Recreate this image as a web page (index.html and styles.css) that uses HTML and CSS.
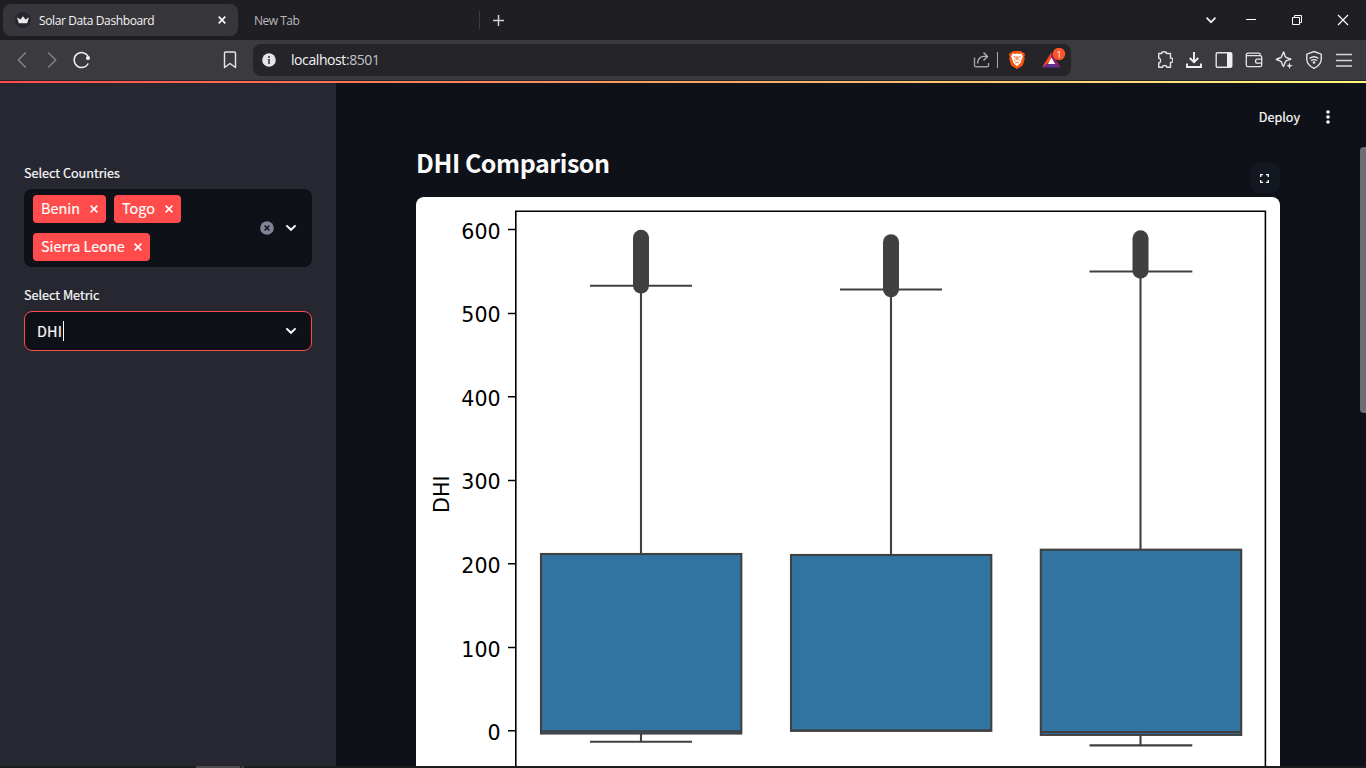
FILE: index.html
```html
<!DOCTYPE html>
<html lang="en">
<head>
<meta charset="utf-8">
<title>Solar Data Dashboard</title>
<link rel="stylesheet" href="styles.css">
</head>
<body>
<div class="window">
  <header class="tabstrip">
    <div class="tab tab-active">
      <svg class="favicon" width="16" height="16" viewBox="0 0 16 16"><circle cx="8" cy="8" r="8" fill="#262730"/><path d="M2 5.200 5.400 7.500 8 4.200 10.600 7.500 14 5.200 12.200 11.300H3.800Z" fill="#e8e8e8"/></svg>
      <span class="tab-title">Solar Data Dashboard</span>
      <svg class="tab-close" width="8" height="8" viewBox="0 0 8 8"><path d="M.7.7 7.3 7.3M7.3.7.7 7.3" stroke="#f5f5f5" stroke-width="1.7"/></svg>
    </div>
    <div class="tab tab-idle"><span>New Tab</span></div>
    <button class="new-tab" aria-label="New tab"><svg width="11" height="11" viewBox="0 0 11 11"><path d="M5.500 0V11M0 5.500H11" stroke="#d0d0d2" stroke-width="1.500"/></svg></button>
    <div class="window-controls">
      <svg width="46" height="40" viewBox="0 0 46 40"><path d="M18.500 17.700 23 22.200 27.500 17.700" fill="none" stroke="#eee" stroke-width="1.700"/></svg>
      <svg width="40" height="40" viewBox="0 0 40 40"><path d="M12 19.500H22" stroke="#fff"/></svg>
      <svg width="46" height="40" viewBox="0 0 46 40"><path d="M18.500 17.500H25.500V24.500H18.500ZM20.500 17V15.500H27.500V22.500H26" fill="none" stroke="#fff"/></svg>
      <svg width="46" height="40" viewBox="0 0 46 40"><path d="M18 15 28 25M28 15 18 25" stroke="#fff" stroke-width="1.200"/></svg>
    </div>
  </header>

  <nav class="toolbar">
    <div class="nav-buttons">
      <svg width="30" height="40" viewBox="0 0 30 40"><path d="M18.800 12.500 11.300 20 18.800 27.500" fill="none" stroke="#88888d" stroke-width="1.300"/></svg>
      <svg width="30" height="40" viewBox="0 0 30 40"><path d="M11.200 12.500 18.700 20 11.200 27.500" fill="none" stroke="#88888d" stroke-width="1.300"/></svg>
      <svg width="30" height="40" viewBox="0 0 30 40"><path d="M21.300 23.500A7.500 7.500 0 1 1 21.300 16.500" fill="none" stroke="#f2f2f2" stroke-width="1.500"/><circle cx="21" cy="18" r="2.100" fill="#f2f2f2"/></svg>
    </div>
    <svg class="bookmark" width="14" height="18" viewBox="0 0 14 18"><path d="M2.500 1H11.500Q12.500 1 12.500 2V16.500L7 12.500 1.500 16.500V2Q1.500 1 2.500 1Z" fill="none" stroke="#e8e8ea" stroke-width="1.400" stroke-linejoin="round"/></svg>
    <div class="address">
      <svg class="info" width="14" height="14" viewBox="0 0 14 14"><circle cx="7" cy="7" r="6.800" fill="#e4e4e9"/><path d="M6 3H8V5H6ZM5.500 6H8V11H6V7H5.500Z" fill="#5b5b61"/></svg>
      <span class="url">localhost<span class="port">:8501</span></span>
      <div class="address-actions">
        <svg width="17" height="18" viewBox="0 0 17 18"><path d="M1.500 6.500V14.500Q1.500 15.800 3 15.800H14.200Q15.500 15.800 15.500 14.500V12" fill="none" stroke="#9f9fa2" stroke-width="1.400"/><path d="M4.500 12.500Q5 6 10.500 5.400H14M10.500 1.500 14.500 5.400 10.500 9.400" fill="none" stroke="#b4b4b6" stroke-width="1.400"/></svg>
        <i class="separator"></i>
        <svg class="lion" width="16" height="18" viewBox="0 0 16 18"><path d="M4 0H12L13.300 1.500 15 1.700 16 4 15.200 6 15.700 8 13.800 14.400 8 18 2.200 14.400.3 8 .8 6 0 4 1 1.700 2.700 1.500Z" fill="#fb5410"/><path d="M3.500 2.500 6 3 8 2.500 10 3 12.500 2.500 13.800 5.500 12.300 9.500 11.500 12 8 15.300 4.500 12 3.700 9.500 2.200 5.500Z" fill="#fff"/><path d="M4.300 5.700 6.500 6.200M11.700 5.700 9.500 6.200M7.200 5.500V9M8.800 5.500V9M4.800 8.500 6.500 10M11.200 8.500 9.500 10M6.200 12 8 11 9.800 12" fill="none" stroke="#fb5410" stroke-width=".9"/></svg>
        <svg class="rewards" width="24" height="22" viewBox="0 0 24 22"><path d="M9.500 4 0 19.500 9.500 15Z" fill="#ff4724"/><path d="M0 19.500H18.500L14 15H6Z" fill="#662d91"/><path d="M9.500 4 18.500 19.500 13.500 16 9.500 9Z" fill="#9e1f63"/><path d="M9.500 9.500 6 16H13.200Z" fill="#fff"/><circle cx="17" cy="6" r="6.200" fill="#fb542b"/><text x="17" y="9.500" text-anchor="middle" class="badge-text">1</text></svg>
      </div>
    </div>
    <div class="extensions">
      <svg width="18" height="20" viewBox="0 0 18 20"><path d="M3.200 3.500H6.200C6.200 1.200 11 1.200 11 3.500H15V8C18.300 8 18.300 12.500 15 12.500V17.300H11.300C11.300 14.800 7 14.800 7 17.300H3.200V13C5.700 13 5.700 8.200 3.200 8.200Z" transform="translate(.5 0)" fill="none" stroke="#e4e4e8" stroke-width="1.400" stroke-linejoin="round"/></svg>
      <svg width="18" height="20" viewBox="0 0 18 20"><path d="M9 2V12M4.800 8 9 12.200 13.200 8M2 13.500V17H16V13.500" fill="none" stroke="#f2f2f4" stroke-width="1.900"/></svg>
      <svg width="18" height="20" viewBox="0 0 18 20"><rect x="1.200" y="2.700" width="15.600" height="14.600" rx="1.200" fill="none" stroke="#e4e4e8" stroke-width="1.400"/><path d="M12 3H17V17H12Z" fill="#eeeef5"/></svg>
      <svg width="18" height="20" viewBox="0 0 18 20"><path d="M15.200 5.700V4.500Q15.200 3.200 14 3.200H3Q1.300 3.200 1.300 4.500V15Q1.300 16.700 3 16.700H15Q16.700 16.700 16.700 15V7.200Q16.700 5.700 15 5.700H3Q1.300 5.700 1.300 4.500M17 9.200H12.500Q10.500 9.200 10.500 11.200T12.500 13.200H17" fill="none" stroke="#e4e4e8" stroke-width="1.300"/></svg>
      <svg width="18" height="20" viewBox="0 0 18 20"><path d="M8.500 2Q9.200 3 10 6 10.500 7.700 15.800 9 16 9.500 11.200 10.800 10.500 11.200 8.500 16.500 7.500 15.500 6.700 12.500 6.200 11 1.300 9.500 1.300 8.800 5.800 7.700 6.500 7.200 8.500 2Z" fill="none" stroke="#e4e4e8" stroke-width="1.400" stroke-linejoin="round"/><path d="M14.500 12.500 15.400 15 18 15.800 15.400 16.600 14.500 19 13.500 16.600 11.200 15.800 13.500 15Z" fill="#e4e4e8"/></svg>
      <svg width="18" height="20" viewBox="0 0 18 20"><path d="M9 1.500 16.200 4.200V10Q15.500 15.300 9 18.300 2.500 15.300 1.800 10V4.200Z" fill="none" stroke="#e4e4e8" stroke-width="1.400"/><path d="M4.500 8.500Q9 5 13.500 8.500M6 10.800Q9 8.500 12 10.800" fill="none" stroke="#e4e4e8" stroke-width="1.300"/><circle cx="9" cy="12.500" r="1.300" fill="#e4e4e8"/></svg>
      <svg width="18" height="20" viewBox="0 0 18 20"><path d="M1 4.500H17M1 10.500H17M1 16H17" stroke="#d8d8db" stroke-width="1.300"/></svg>
    </div>
  </nav>
  <div class="decoration"></div>

  <div class="app">
    <aside class="sidebar">
      <label class="label">Select Countries</label>
      <div class="multiselect">
        <div class="tags">
          <span class="tag tag-benin"><span>Benin</span><svg width="8" height="8" viewBox="0 0 8 8"><path d="M.6.6 7.400 7.400M7.400.6.6 7.400"/></svg></span>
          <span class="tag tag-togo"><span>Togo</span><svg width="8" height="8" viewBox="0 0 8 8"><path d="M.6.6 7.400 7.400M7.400.6.6 7.400"/></svg></span>
          <span class="tag tag-sierra"><span>Sierra Leone</span><svg width="8" height="8" viewBox="0 0 8 8"><path d="M.6.6 7.400 7.400M7.400.6.6 7.400"/></svg></span>
        </div>
        <svg class="clear" width="14" height="14" viewBox="0 0 14 14"><circle cx="7" cy="7" r="6.800" fill="#808495"/><path d="M4.600 4.600 9.400 9.400M9.400 4.600 4.600 9.400" stroke="#0e1117" stroke-width="1.400"/></svg>
        <svg class="chevron" width="12" height="8" viewBox="0 0 12 8"><path d="M1.400 1.400 6 5.800 10.600 1.400"/></svg>
      </div>
      <label class="label">Select Metric</label>
      <div class="select">
        <span class="value">DHI</span><i class="caret"></i>
        <svg class="chevron" width="12" height="8" viewBox="0 0 12 8"><path d="M1.400 1.400 6 5.800 10.600 1.400"/></svg>
      </div>
    </aside>
    <main class="main">
      <div class="app-toolbar">
        <span class="deploy">Deploy</span>
        <svg width="4" height="16" viewBox="0 0 4 16"><g fill="#fafafa"><circle cx="2" cy="3" r="1.800"/><circle cx="2" cy="8" r="1.800"/><circle cx="2" cy="13" r="1.800"/></g></svg>
      </div>
      <div class="heading-row">
        <h2>DHI Comparison</h2>
        <span class="fullscreen"><svg width="9" height="9" viewBox="0 0 9 9"><path d="M.7 3V.7H3M6 .7H8.300V3M8.300 6V8.300H6M3 8.300H.7V6" fill="none" stroke="#fff" stroke-width="1.300"/></svg></span>
      </div>
      <svg class="chart" width="864" height="569" viewBox="416 197 864 569">
        <path class="frame" d="M515.800 768V211.300H1265.400V768"/>
        <path class="ticks" d="M508 229.500H515.500M508 313.500H515.500M508 396.700H515.500M508 480.500H515.500M508 563.700H515.500M508 647.500H515.500M508 730.800H515.500"/>
        <g class="axis">
          <text x="500.600" y="238.500">600</text><text x="500.600" y="322">500</text><text x="500.600" y="405.500">400</text><text x="500.600" y="489.200">300</text><text x="500.600" y="572.700">200</text><text x="500.600" y="656.500">100</text><text x="500.600" y="739.700">0</text>
          <text class="axis-title" transform="translate(449.400 494.200) rotate(-90)">DHI</text>
        </g>
        <g class="boxplot">
          <path d="M641 290V554M641 733V741.700M590 285.700H692M590 741.700H692"/>
          <rect x="541" y="554" width="200.300" height="179.500"/>
          <path d="M541 731.200H741"/>
          <path class="outliers" d="M641 237.800V285.500"/>
          <path d="M891 295V555M840 289.500H942"/>
          <rect x="791" y="555" width="200.300" height="175.800"/>
          <path d="M791 730.500H991"/>
          <path class="outliers" d="M891 242.200V289.300"/>
          <path d="M1140.500 275V549.500M1140.500 735V745.400M1089.500 271.500H1192.300M1089.500 745.400H1192.300"/>
          <rect x="1040.800" y="549.700" width="200.400" height="185.200"/>
          <path d="M1041 732H1241"/>
          <path class="outliers" d="M1140.500 238.300V270.700"/>
        </g>
      </svg>
      <i class="scrollbar"></i>
    </main>
  </div>
  <footer class="taskbar"><i></i><b></b></footer>
</div>
</body>
</html>
```
FILE: styles.css
```css
* { box-sizing: border-box; }
body { margin: 0; background: #0e1117; font-family: "Open Sans", "Noto Sans", sans-serif; }
svg { display: block; flex: none; }
.window { width: 1366px; height: 768px; display: flex; flex-direction: column; overflow: hidden; }
.tabstrip { height: 40px; flex: none; display: flex; align-items: center; background: #1f1e23; padding-left: 3px; }
.tab { display: flex; align-items: center; font-size: 12px; }
.tab-active { width: 235px; height: 32px; padding: 0 12px; border-radius: 8px; background: #37363b; color: #f4f4f5; }
.tab-title { margin-left: 8px; letter-spacing: -.38px; white-space: nowrap; }
.tab-close { margin-left: auto; }
.tab-idle { width: 242px; height: 18px; padding-left: 16px; color: #b9b9bc; border-right: 1px solid #3c3b40; letter-spacing: -.5px; }
.new-tab { border: 0; padding: 0; margin-left: 12.500px; background: none; }
.window-controls { display: flex; margin-left: auto; }
.toolbar { height: 40px; flex: none; display: flex; align-items: center; background: #3b3a3f; }
.nav-buttons { display: flex; padding-left: 7px; width: 223px; }
.address { width: 818px; height: 32px; margin-left: 16px; padding: 0 5px 0 9px; display: flex; align-items: center; background: #252429; border-radius: 8px; }
.url { margin: -2px 0 0 15px; font-size: 14px; letter-spacing: -.42px; color: #f4f4f5; }
.port { color: #c2c2c5; }
.address-actions { margin-left: auto; display: flex; align-items: center; }
.separator { width: 1px; height: 16px; margin: 0 11px 0 7px; background: #a9a9ab; }
.rewards { margin: -3px 0 0 17px; }
.badge-text { font: 9px "Open Sans", sans-serif; fill: #fff; }
.extensions { display: flex; gap: 12px; margin-left: auto; padding-right: 13px; }
.decoration { height: 3px; flex: none; border-top: 1px solid #26252a; background: linear-gradient(90deg, #ff4b4b, #fffd80); }
.app { flex: 1; min-height: 0; display: flex; font-family: "Noto Sans CJK JP", sans-serif; color: #fafafa; -webkit-text-stroke: .2px; }
.sidebar { width: 336px; padding: 80px 24px 0; background: #262730; }
.label { display: block; height: 20px; margin-bottom: 6px; font-size: 12.600px; line-height: 20px; }
.multiselect { height: 78px; margin-bottom: 18px; padding: 6px 14px 6px 9px; display: flex; align-items: center; border-radius: 8px; background: #0e1117; }
.tags { width: 217px; height: 66px; display: flex; flex-wrap: wrap; gap: 10px 8px; }
.tag { height: 28px; padding: 0 8.500px 0 8px; display: flex; align-items: center; justify-content: space-between; border-radius: 4px; background: #ff4b4b; font-size: 14.400px; line-height: 26px; white-space: nowrap; }
.tag > span { height: 28px; }
.tag svg { stroke: #fff; stroke-width: 1.500; }
.tag-benin { width: 73px; }
.tag-togo { width: 67px; }
.tag-sierra { width: 117px; }
.clear { margin-left: 10px; }
.chevron { margin-left: auto; fill: none; stroke: #fafafa; stroke-width: 2; }
.multiselect .chevron { margin-right: 1px; }
.select { height: 40px; padding: 0 14px 0 12px; display: flex; align-items: center; border: 1px solid #ff4b4b; border-radius: 8px; background: #0e1117; font-size: 14.400px; }
.value { height: 38px; line-height: 38px; letter-spacing: .15px; }
.caret { width: 1px; height: 20px; margin-left: 1px; background: #fafafa; }
.main { flex: 1; position: relative; padding-left: 80px; background: #0e1117; }
.app-toolbar { height: 60px; padding: 8px 36px 0 0; display: flex; justify-content: flex-end; align-items: center; gap: 26px; }
.deploy { height: 22px; font-size: 12.600px; line-height: 22px; }
.heading-row { width: 864px; height: 54px; display: flex; justify-content: space-between; }
h2 { margin: 0; font-size: 25px; line-height: 39px; font-weight: 700; letter-spacing: -.45px; -webkit-text-stroke: 0; }
.fullscreen { width: 30px; height: 30px; margin-top: 20px; padding: 0 .5px 0 0; display: flex; align-items: center; justify-content: center; border-radius: 8px; background: #131720; }
.chart { border-radius: 8px 8px 0 0; background: #fff; -webkit-text-stroke: 0; }
.frame, .ticks { fill: none; stroke: #000; stroke-width: 1.600; }
.axis { font: 20.600px "DejaVu Sans", sans-serif; fill: #000; text-anchor: end; }
.axis .axis-title { text-anchor: middle; }
.boxplot path { fill: none; stroke: #404040; stroke-width: 2.100; }
.boxplot rect { fill: #3274a1; stroke: #404040; stroke-width: 2.100; }
.boxplot .outliers { stroke-width: 16; stroke-linecap: round; }
.scrollbar { position: absolute; right: 0; top: 64px; width: 6px; height: 266px; border-radius: 4px 0 0 4px; background: #6d6e72; }
.taskbar { height: 2px; flex: none; display: flex; background: #1c1d1e; padding-left: 196px; }
.taskbar i { width: 44px; background: #4c4c4d; }
.taskbar b { width: 3px; margin-left: 1px; background: #3c3c3d; }
```
